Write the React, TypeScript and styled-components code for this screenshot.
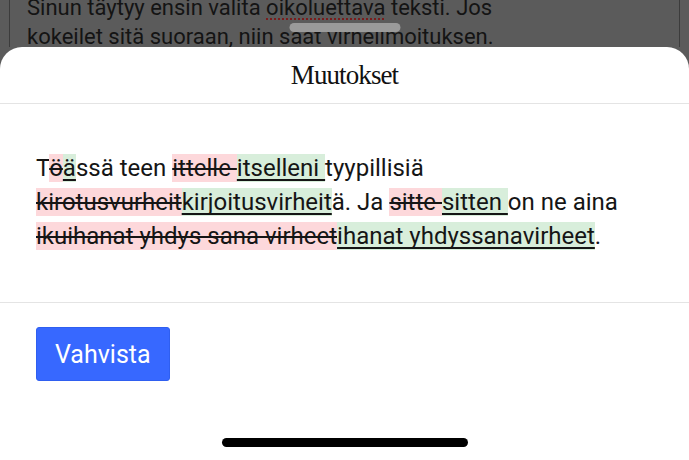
import styled, { createGlobalStyle } from "styled-components";

const GlobalStyle = createGlobalStyle`
  html, body {
    margin: 0;
    padding: 0;
    height: 100%;
    background: #5b5b5b;
    overflow: hidden;
  }
  #root {
    height: 100%;
  }
`;

const Page = styled.div`
  position: relative;
  height: 100vh;
  display: flex;
  flex-direction: column;
  font-family: Roboto, "Liberation Sans", sans-serif;
`;

const Backdrop = styled.div`
  height: 47px;
  flex-shrink: 0;
  margin: 0 9px;
  border-left: 1px solid #3c3c3c;
  border-right: 1px solid #3c3c3c;
  overflow: hidden;
`;

const BackdropText = styled.p`
  margin: -7px 0 0;
  padding-left: 17px;
  font-size: 22px;
  line-height: 29px;
  color: #141414;
  white-space: nowrap;
`;

const Misspelled = styled.span`
  text-decoration: underline dotted #7a1c1c;
  text-decoration-thickness: 2px;
  text-underline-offset: 3px;
`;

const Grabber = styled.div`
  position: absolute;
  top: 23px;
  left: 50%;
  transform: translateX(-50%);
  width: 111px;
  height: 9px;
  border-radius: 5px;
  background: #9a9a9a;
`;

const Sheet = styled.div`
  flex: 1;
  display: flex;
  flex-direction: column;
  background: #fff;
  border-radius: 22px 22px 0 0;
`;

const Header = styled.div`
  height: 56px;
  display: flex;
  align-items: center;
  justify-content: center;
  border-bottom: 1px solid #e4e4e4;
`;

const Title = styled.h1`
  margin: 0;
  font-family: "Liberation Serif", "DejaVu Serif", serif;
  font-weight: 400;
  font-size: 27px;
  letter-spacing: -0.9px;
  color: #111;
`;

const Body = styled.div`
  padding: 47px 36px 49px;
  border-bottom: 1px solid #e4e4e4;
`;

const Diff = styled.p`
  margin: 0;
  font-size: 24px;
  line-height: 34px;
  color: #151515;
  white-space: nowrap;
`;

const Removed = styled.del`
  background: #fdd8db;
  text-decoration: line-through;
  text-decoration-thickness: 1.5px;
`;

const Added = styled.ins`
  background: #d8eedb;
  text-decoration: underline;
  text-decoration-thickness: 1.5px;
  text-decoration-skip-ink: none;
  text-underline-offset: 3px;
`;

const Footer = styled.div`
  padding: 24px 36px 0;
`;

const ConfirmButton = styled.button`
  height: 54px;
  padding: 0 18px;
  border: 1px solid #2f5ff0;
  border-radius: 3px;
  background: #3768ff;
  color: #fff;
  font-family: Roboto, "Liberation Sans", sans-serif;
  font-size: 25px;
  cursor: pointer;
`;

const HomeIndicator = styled.div`
  margin: auto auto 13px;
  width: 246px;
  height: 9px;
  border-radius: 5px;
  background: #000;
`;

export default function App() {
  return (
    <>
      <GlobalStyle />
      <Page>
        <Backdrop>
          <BackdropText>
            Sinun täytyy ensin valita <Misspelled>oikoluettava</Misspelled> teksti. Jos
            <br />
            kokeilet sitä suoraan, niin saat virheilmoituksen.
          </BackdropText>
        </Backdrop>
        <Grabber />
        <Sheet>
          <Header>
            <Title>Muutokset</Title>
          </Header>
          <Body>
            <Diff>
              T<Removed>ö</Removed>
              <Added>ä</Added>ssä teen <Removed>ittelle </Removed>
              <Added>itselleni </Added>tyypillisiä
              <br />
              <Removed>kirotusvurheit</Removed>
              <Added>kirjoitusvirheit</Added>ä. Ja <Removed>sitte </Removed>
              <Added>sitten </Added>on ne aina
              <br />
              <Removed>ikuihanat yhdys sana virheet</Removed>
              <Added>ihanat yhdyssanavirheet</Added>.
            </Diff>
          </Body>
          <Footer>
            <ConfirmButton>Vahvista</ConfirmButton>
          </Footer>
          <HomeIndicator />
        </Sheet>
      </Page>
    </>
  );
}
